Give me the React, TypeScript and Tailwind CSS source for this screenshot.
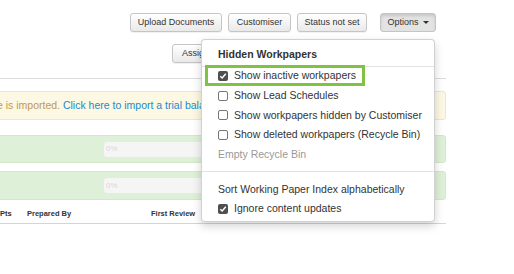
import React from "react";

function Btn({ children, className = "" }: { children: React.ReactNode; className?: string }) {
  return (
    <div
      className={
        "h-[19px] flex items-center justify-center rounded-[3px] border border-[#c5c5c5] bg-gradient-to-b from-[#ffffff] to-[#e9e9e9] text-[9px] text-[#333] shadow-[0_1px_1px_rgba(0,0,0,0.06)] " +
        className
      }
    >
      {children}
    </div>
  );
}

function Check({ checked }: { checked?: boolean }) {
  if (checked) {
    return (
      <span className="w-[10px] h-[10px] rounded-[2px] bg-[#4f4f4f] flex items-center justify-center shrink-0">
        <svg width="8" height="8" viewBox="0 0 8 8">
          <path d="M1.3 4.2 L3.2 6 L6.8 1.8" stroke="#fff" strokeWidth="1.5" fill="none" />
        </svg>
      </span>
    );
  }
  return <span className="w-[10px] h-[10px] rounded-[2px] border border-[#777] bg-white shrink-0" />;
}

function Item({ children, checked, box = true }: { children: React.ReactNode; checked?: boolean; box?: boolean }) {
  return (
    <div className="h-[19.6px] flex items-center pl-[16px]">
      {box && <Check checked={checked} />}
      <span className={box ? "ml-[6px]" : ""}>{children}</span>
    </div>
  );
}

export default function App() {
  return (
    <div
      className="relative w-[514px] h-[274px] overflow-hidden bg-white text-[#333]"
      style={{ fontFamily: '"Liberation Sans", Arial, sans-serif' }}
    >
      <div className="w-[446px]">
        {/* toolbar */}
        <div className="flex justify-end pt-[13px] pr-[10px]">
          <Btn className="w-[92px]">Upload Documents</Btn>
          <Btn className="w-[63px] ml-[6px]">Customiser</Btn>
          <Btn className="w-[70px] ml-[6px]">Status not set</Btn>
          <div className="w-[56px] h-[19px] ml-[13px] flex items-center justify-center gap-[4px] rounded-[3px] border border-[#c5c5c5] bg-[#e3e3e3] text-[9px] text-[#333] shadow-[inset_0_2px_3px_rgba(0,0,0,0.12)]">
            <span>Options</span>
            <span className="w-0 h-0 border-l-[3px] border-r-[3px] border-t-[3px] border-l-transparent border-r-transparent border-t-[#333]" />
          </div>
        </div>
        <div className="flex pl-[172px] mt-[12px]">
          <Btn className="w-[70px] justify-start pl-[9px]">Assign</Btn>
        </div>
        <div className="mt-[15px] border-b border-[#dcdcdc]" />
        {/* alert */}
        <div className="mt-[12px] h-[29px] -ml-[10px] w-[456px] flex items-center overflow-hidden whitespace-nowrap border border-[#f6e4c2] rounded-[3px] bg-[#fcf8e3] text-[10.5px] text-[#c09853]">
          <span className="ml-[6px]">
            e is imported. <span className="text-[#1a8ad0]">Click here to import a trial balance</span>
          </span>
        </div>
        {/* green rows */}
        <div className="mt-[15px] h-[28px] -ml-[10px] w-[456px] flex items-center bg-[#dff0d8] border border-[#d3e8c9] rounded-[3px]">
          <div className="ml-[113px] w-[310px] h-[15px] rounded-[3px] bg-[#f5f5f5] flex items-center text-[8px] text-[#d8d8d8] pl-[2px]">0%</div>
        </div>
        <div className="mt-[8px] h-[29px] -ml-[10px] w-[456px] flex items-center bg-[#dff0d8] border border-[#d3e8c9] rounded-[3px]">
          <div className="ml-[113px] w-[310px] h-[15px] rounded-[3px] bg-[#f5f5f5] flex items-center text-[8px] text-[#d8d8d8] pl-[2px]">0%</div>
        </div>
        {/* table header */}
        <div className="mt-[4px] h-[20px] flex items-center border-b border-[#d5d5d5] text-[7.5px] font-bold text-[#333] whitespace-nowrap">
          <span className="w-[27px]">Pts</span>
          <span className="w-[124px]">Prepared By</span>
          <span>First Review</span>
        </div>
      </div>

      {/* dropdown */}
      <div className="absolute left-[201px] top-[39px] w-[234px] h-[183px] bg-white border border-[rgba(0,0,0,0.18)] rounded-[4px] shadow-[0_4px_10px_rgba(0,0,0,0.18)] text-[10.5px] text-[#333] whitespace-nowrap">
        <div className="h-[26.5px] pt-[4px] flex items-center pl-[16px] font-bold border-b border-[#e2e2e2]">
          Hidden Workpapers
        </div>
        <Item checked>Show inactive workpapers</Item>
        <Item>Show Lead Schedules</Item>
        <Item>Show workpapers hidden by Customiser</Item>
        <Item>Show deleted workpapers (Recycle Bin)</Item>
        <Item box={false}>
          <span className="text-[#999]">Empty Recycle Bin</span>
        </Item>
        <div className="mt-[7px] border-b border-[#e2e2e2]" />
        <div className="mt-[8px]">
          <Item box={false}>Sort Working Paper Index alphabetically</Item>
          <div className="-mt-[0.6px]">
            <Item checked>Ignore content updates</Item>
          </div>
        </div>
        <div className="absolute left-[3px] top-[25px] w-[160px] h-[21px] border-[3px] border-[#80c242]" />
      </div>
    </div>
  );
}
